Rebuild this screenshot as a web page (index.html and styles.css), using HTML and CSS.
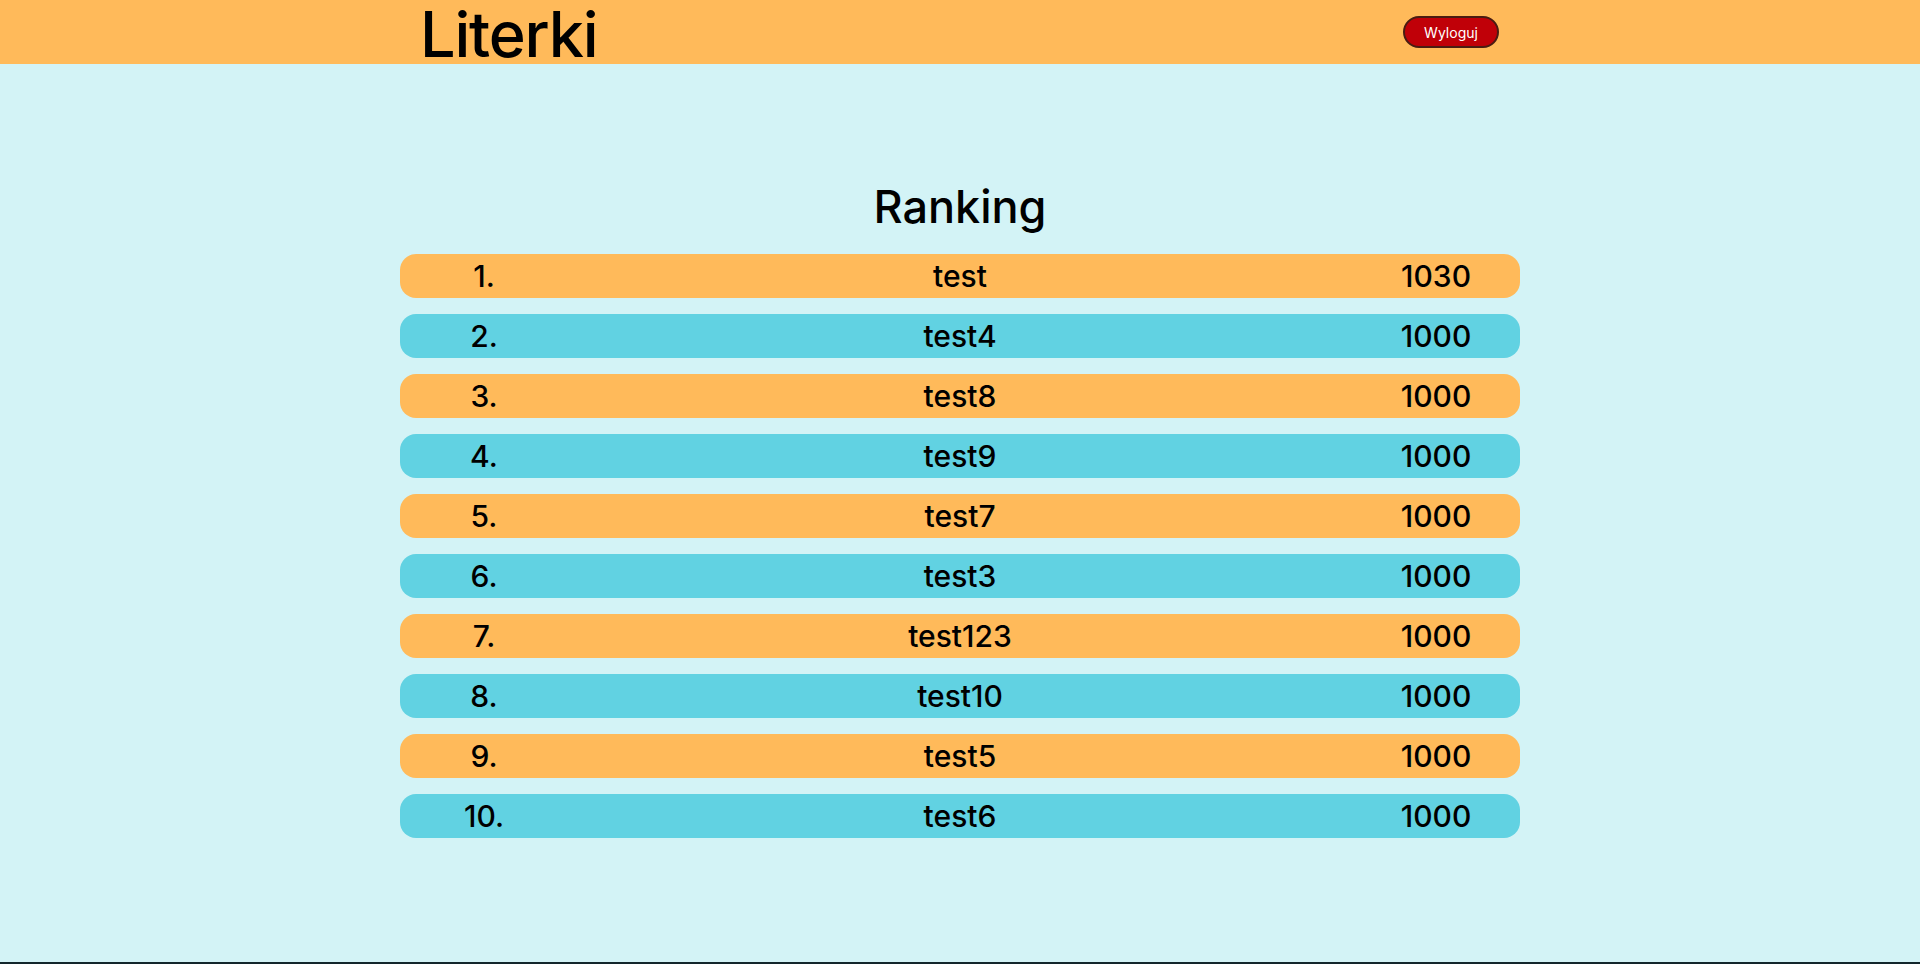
FILE: index.html
```html
<!DOCTYPE html>
<html lang="pl">
<head>
<meta charset="utf-8">
<title>Literki - Ranking</title>
<link rel="stylesheet" href="styles.css">
</head>
<body>
<div class="page">
  <header class="topbar">
    <div class="topbar-inner">
      <div class="logo">Literki</div>
      <button class="logout">Wyloguj</button>
    </div>
  </header>
  <main class="main">
    <h1 class="title">Ranking</h1>
    <ol class="ranking">
      <li class="row row-orange"><span class="pos">1.</span><span class="name">test</span><span class="score">1030</span></li>
      <li class="row row-teal"><span class="pos">2.</span><span class="name">test4</span><span class="score">1000</span></li>
      <li class="row row-orange"><span class="pos">3.</span><span class="name">test8</span><span class="score">1000</span></li>
      <li class="row row-teal"><span class="pos">4.</span><span class="name">test9</span><span class="score">1000</span></li>
      <li class="row row-orange"><span class="pos">5.</span><span class="name">test7</span><span class="score">1000</span></li>
      <li class="row row-teal"><span class="pos">6.</span><span class="name">test3</span><span class="score">1000</span></li>
      <li class="row row-orange"><span class="pos">7.</span><span class="name">test123</span><span class="score">1000</span></li>
      <li class="row row-teal"><span class="pos">8.</span><span class="name">test10</span><span class="score">1000</span></li>
      <li class="row row-orange"><span class="pos">9.</span><span class="name">test5</span><span class="score">1000</span></li>
      <li class="row row-teal"><span class="pos">10.</span><span class="name">test6</span><span class="score">1000</span></li>
    </ol>
  </main>
  <footer class="footer"></footer>
</div>
</body>
</html>
```
FILE: styles.css
```css
* { box-sizing: border-box; }
html, body { margin: 0; padding: 0; }
body {
  font-family: Inter, "Noto Sans", sans-serif;
  color: #000;
  background: #d3f3f6;
}
.page {
  display: flex;
  flex-direction: column;
  height: 100vh;
}
.topbar {
  background: #ffba5a;
  height: 64px;
  flex: none;
}
.topbar-inner {
  width: 1080px;
  margin: 0 auto;
  height: 100%;
  display: flex;
  align-items: center;
  justify-content: space-between;
}
.logo {
  align-self: flex-start;
  margin-top: 6px;
  font-size: 63px;
  font-weight: 500;
  letter-spacing: -1.2px;
  line-height: 56px;
}
.logout {
  width: 96px;
  height: 32px;
  margin-right: 1px;
  background: #c00008;
  color: #fff;
  border: 2px solid #4a1c12;
  border-radius: 16px;
  font-family: Inter, "Noto Sans", sans-serif;
  font-size: 14px;
  padding: 0;
}
.main {
  flex: 1;
  padding-top: 117px;
}
.title {
  margin: 0;
  text-align: center;
  font-size: 45px;
  font-weight: 500;
  line-height: 52px;
}
.ranking {
  list-style: none;
  margin: 21px auto 0;
  padding: 0;
  width: 1120px;
  display: flex;
  flex-direction: column;
  gap: 16px;
}
.row {
  height: 44px;
  border-radius: 16px;
  display: flex;
  align-items: center;
  padding: 0 24px;
  font-size: 30px;
  font-weight: 500;
}
.row-orange { background: #ffba5a; }
.row-teal { background: #61d2e2; }
.pos, .score {
  width: 120px;
  text-align: center;
}
.name {
  flex: 1;
  text-align: center;
}
.footer {
  height: 2px;
  flex: none;
  background: #13262b;
}
```
